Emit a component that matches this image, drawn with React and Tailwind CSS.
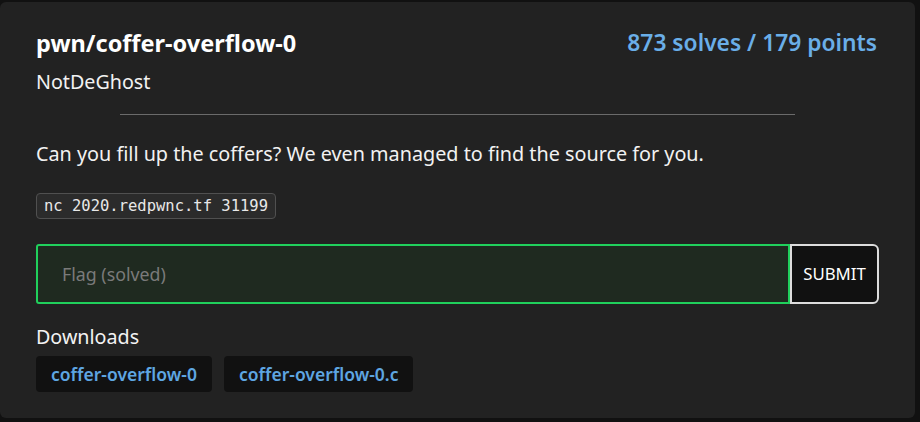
export default function App() {
  const files = ["coffer-overflow-0", "coffer-overflow-0.c"];

  return (
    <div className="w-[920px] h-[422px] bg-[#111111] pt-[2px] pr-[5px] pb-[4px] font-['Noto_Sans',sans-serif] text-[#f2f2f2]">
      <div className="h-full bg-[#222222] rounded-md px-9 pt-[26px]">
        {/* Header */}
        <div className="flex items-start justify-between">
          <div>
            <h1 className="text-[23.5px] font-bold leading-[30px] text-white">pwn/coffer-overflow-0</h1>
            <p className="text-[19.7px] leading-[28px] mt-[10px]">NotDeGhost</p>
          </div>
          <div className="text-[22.8px] font-semibold leading-[30px] text-[#6aaee8] mr-[2px]">
            873 solves / 179 points
          </div>
        </div>

        <div className="w-4/5 mx-auto h-px bg-[#6b6b6b] mt-[18px]" />

        <p className="text-[19.8px] leading-[28px] mt-[25px]">
          Can you fill up the coffers? We even managed to find the source for you.
        </p>

        <div className="mt-[25px] flex">
          <code className="bg-[#2b2b2b] border border-[#505050] rounded-[4px] px-[7px] leading-[24px] text-[15.5px] font-['DejaVu_Sans_Mono',monospace] text-[#e8e8e8]">
            nc 2020.redpwnc.tf 31199
          </code>
        </div>

        {/* Flag form */}
        <div className="flex mt-[25px] h-[60px]">
          <input
            className="flex-1 bg-[#1f2a20] border-2 border-[#20d05c] rounded-l-[3px] px-[24px] text-[17.8px] outline-none placeholder:text-[#7a7a7a]"
            placeholder="Flag (solved)"
          />
          <button className="w-[89px] bg-[#111111] border-2 border-[#dddddd] rounded-r-[6px] text-[16.8px] text-white">
            SUBMIT
          </button>
        </div>

        <div className="mt-[19px]">
          <p className="text-[19.7px] leading-[28px]">Downloads</p>
          <div className="flex gap-3 mt-[5px]">
            {files.map((f) => (
              <a
                key={f}
                className="bg-[#111111] rounded-[4px] px-[15px] h-[36px] flex items-center text-[17.5px] font-semibold text-[#5ea6e2]"
              >
                {f}
              </a>
            ))}
          </div>
        </div>
      </div>
    </div>
  );
}
